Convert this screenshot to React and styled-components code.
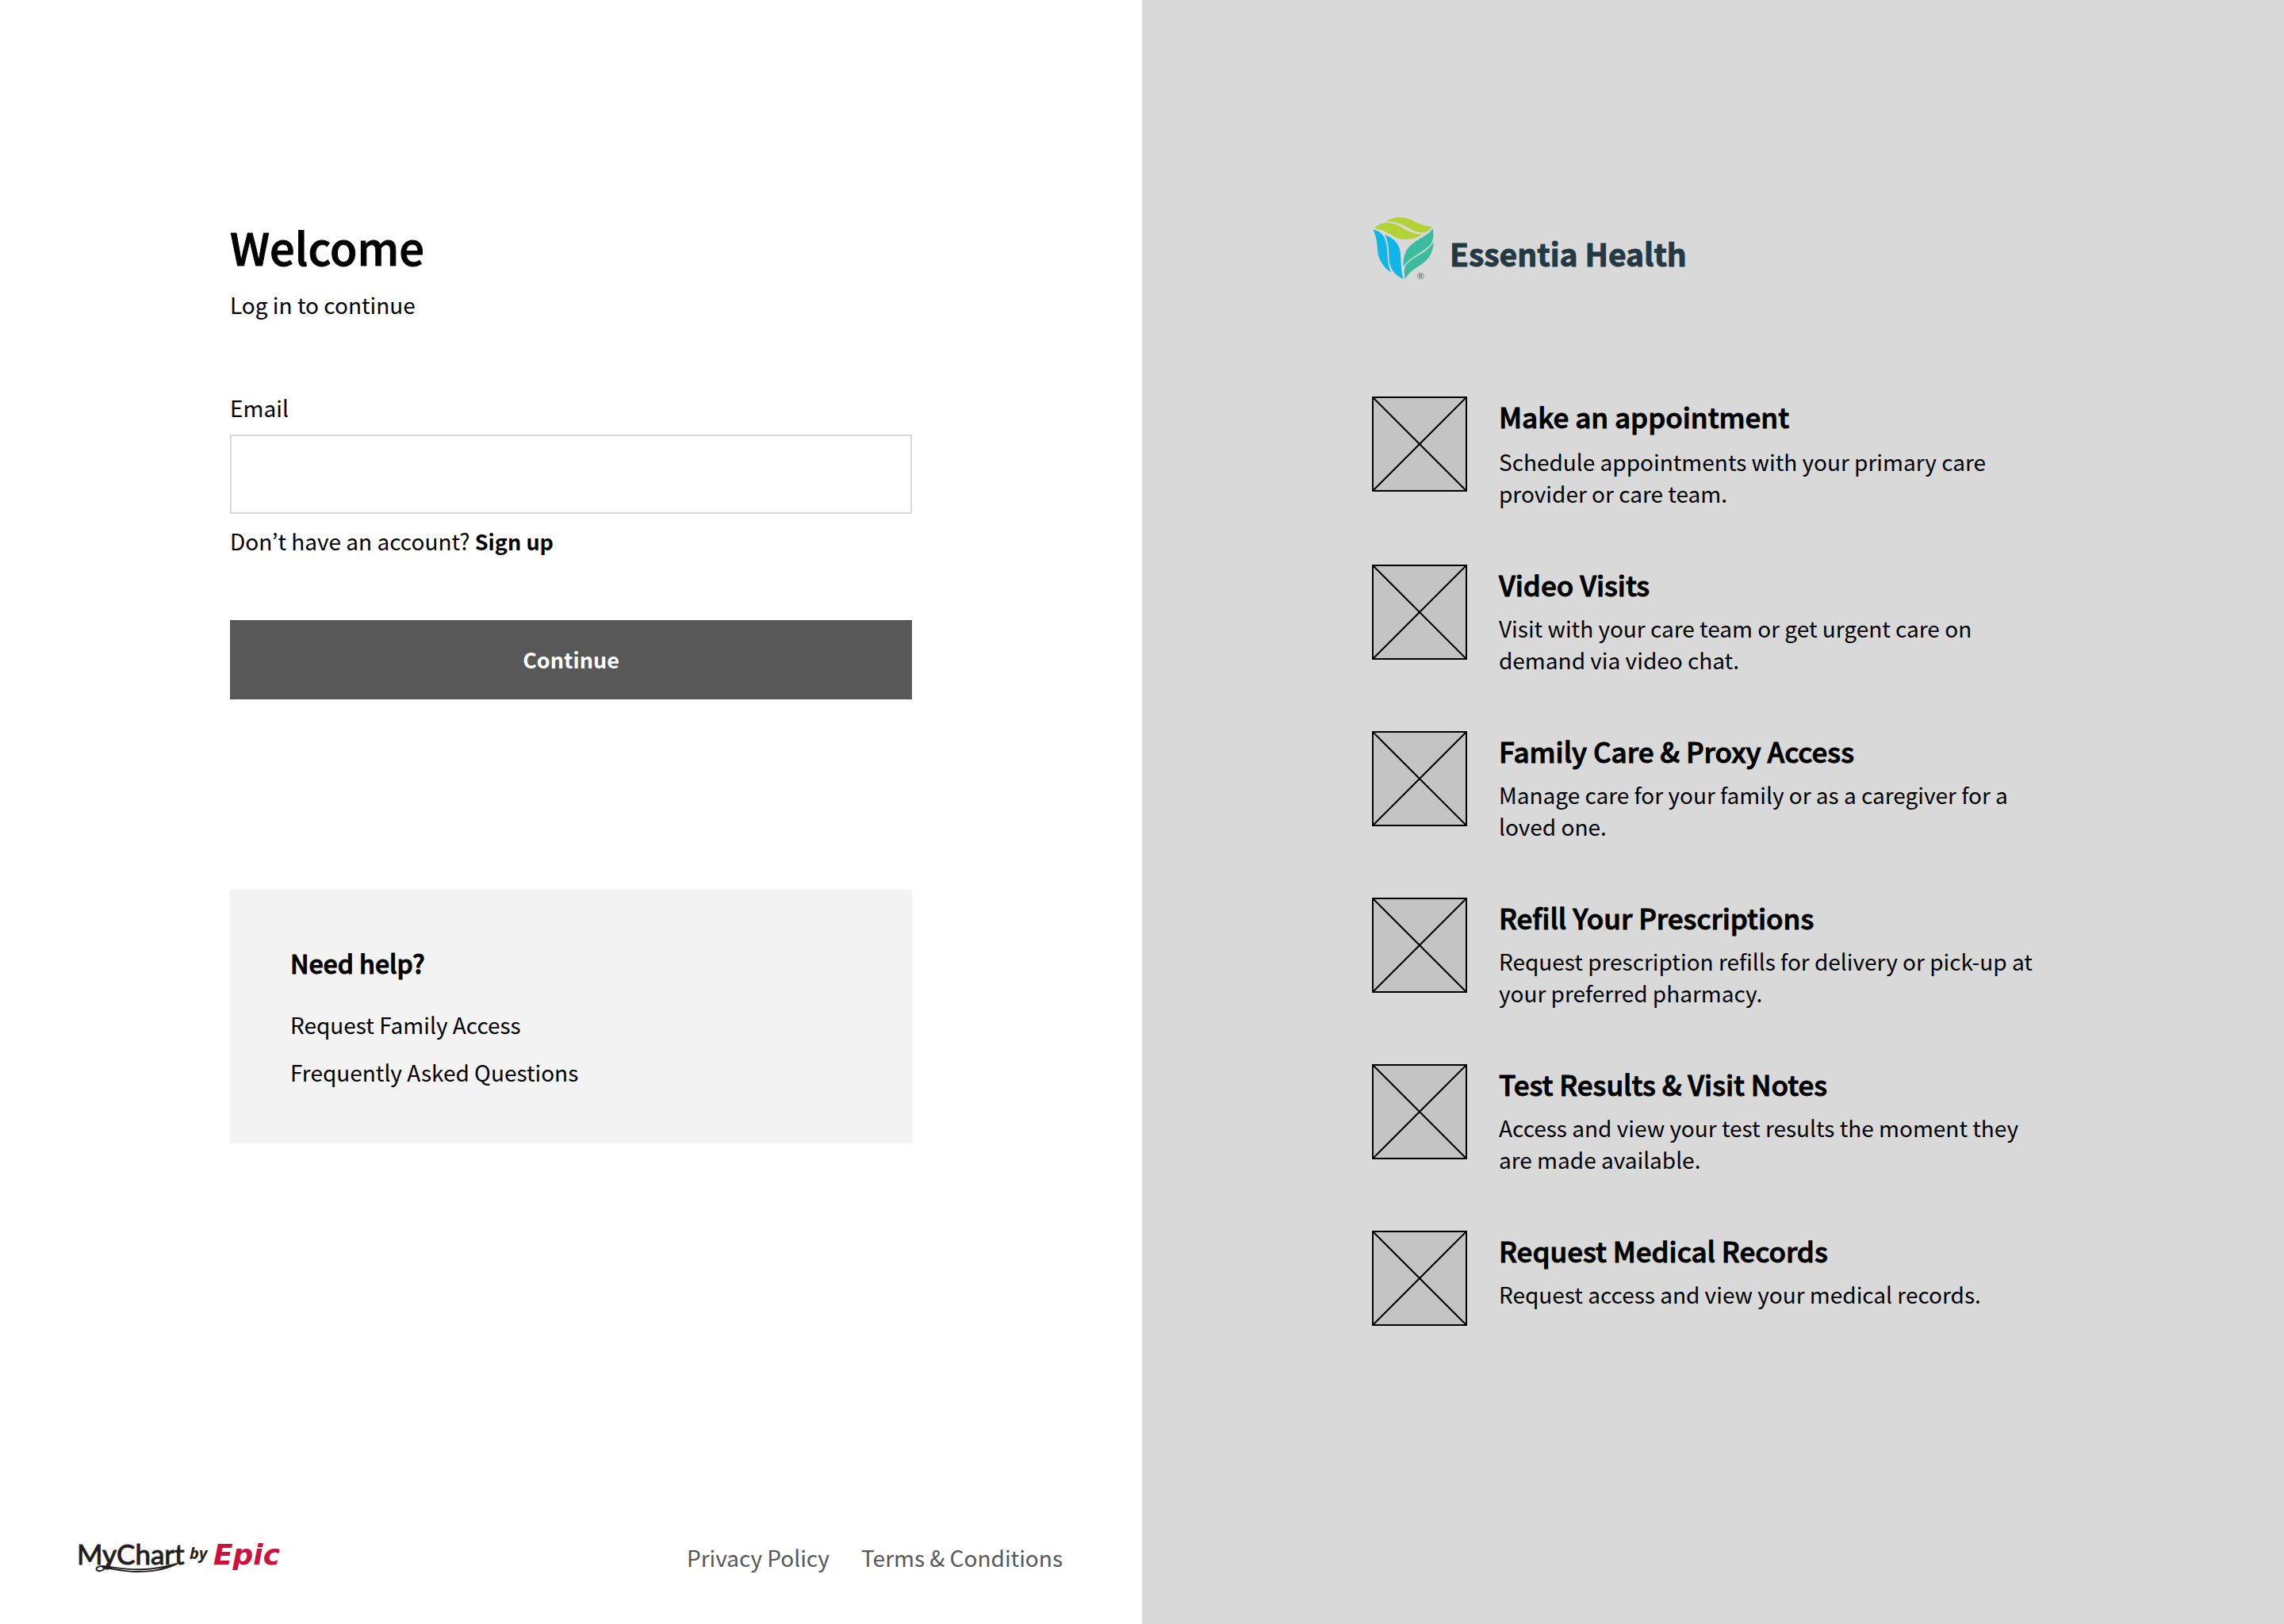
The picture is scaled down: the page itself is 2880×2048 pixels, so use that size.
import React from "react";
import styled, { createGlobalStyle } from "styled-components";

const GlobalStyle = createGlobalStyle`
  *, *::before, *::after { box-sizing: border-box; }
  body {
    margin: 0;
    background: #ffffff;
    color: #000000;
    font-family: "Noto Sans CJK KR", "Noto Sans", sans-serif;
    font-size: 28px;
    line-height: 40px;
  }
  h1, h2, p, ul { margin: 0; padding: 0; }
  h1, h2 {
    font-weight: 500;
    -webkit-text-stroke: 1px currentColor;
  }
`;

const Page = styled.div`
  display: grid;
  grid-template-columns: repeat(2, minmax(0, 1fr));
  min-height: 100vh;
`;

const LoginPanel = styled.main`
  display: flex;
  flex-direction: column;
  padding: 271px 100px 64px;
`;

const FeaturePanel = styled.aside`
  padding: 272px 100px 64px;
  background: #d9d9d9;
`;

const Column = styled.div`
  width: 100%;
  max-width: 860px;
  margin: 0 auto;
`;

const Title = styled.h1`
  margin-bottom: 13px;
  font-size: 56px;
  line-height: 80px;
`;

const Form = styled.form`
  display: flex;
  flex-direction: column;
  margin-top: 90px;
`;

const EmailInput = styled.input`
  height: 100px;
  margin: 14px 0;
  padding: 0 30px;
  border: 2px solid #d9d9d9;
  border-radius: 0;
  background: #ffffff;
  font: inherit;
`;

const TextLink = styled.a`
  color: ${({ $muted }) => ($muted ? "#585858" : "inherit")};
  text-decoration: none;
`;

const SignUpLink = styled(TextLink)`
  font-size: 27px;
  font-weight: 700;
  line-height: 1;
`;

const SubmitButton = styled.button`
  height: 100px;
  margin-top: 80px;
  border: 0;
  background: #585858;
  color: #ffffff;
  font: inherit;
  font-size: 27px;
  font-weight: 700;
`;

const HelpBox = styled.section`
  margin-top: 240px;
  padding: 72px 76px 70px;
  background: #f3f3f3;
`;

const HelpTitle = styled.h2`
  margin-bottom: 38px;
  font-size: 32px;
  line-height: 40px;
`;

const HelpLinks = styled.ul`
  display: grid;
  gap: 20px;
  list-style: none;
`;

const Footer = styled.footer`
  display: flex;
  align-items: center;
  justify-content: space-between;
  margin-top: auto;
`;

const FooterLinks = styled.nav`
  display: flex;
  gap: 40px;
`;

const Logo = styled.svg`
  display: block;
  overflow: visible;
`;

const FeatureList = styled.ul`
  margin-top: 146px;
  list-style: none;
`;

const FeatureItem = styled.li`
  display: flex;
  gap: 40px;
  min-height: 120px;
  margin-bottom: 70px;
`;

const FeatureText = styled.div`
  max-width: 680px;
`;

const FeatureTitle = styled.h2`
  margin-bottom: ${({ $lead }) => ($lead ? 12 : 10)}px;
  font-size: 35px;
  line-height: 50px;
`;

const Placeholder = styled.svg`
  flex: none;
  width: 120px;
  height: 120px;
`;

const features = [
  ["Make an appointment", "Schedule appointments with your primary care provider or care team."],
  ["Video Visits", "Visit with your care team or get urgent care on demand via video chat."],
  ["Family Care & Proxy Access", "Manage care for your family or as a caregiver for a loved one."],
  ["Refill Your Prescriptions", "Request prescription refills for delivery or pick-up at your preferred pharmacy."],
  ["Test Results & Visit Notes", "Access and view your test results the moment they are made available."],
  ["Request Medical Records", "Request access and view your medical records."],
];

function PlaceholderIcon() {
  return (
    <Placeholder viewBox="0 0 120 120" aria-hidden="true">
      <rect x="1" y="1" width="118" height="118" fill="#c4c4c4" stroke="#000" strokeWidth="2" />
      <path d="M1 1L119 119M119 1L1 119" stroke="#000" strokeWidth="2" />
    </Placeholder>
  );
}

function EssentiaLogo() {
  return (
    <Logo width="400" height="82" viewBox="0 0 400 82" role="img" aria-label="Essentia Health">
      <g transform="translate(-30 -22) scale(0.33333)">
        <path fill="#b2d235" d="M143 87C160 76 178 72 195 72C240 72 261 105 318 108C306 124 293 130 278 130C237 128 207 86 143 87Z" />
        <path fill="#b2d235" d="M98 114C112 98 132 91 155 93C203 98 225 137 279 136C260 151 239 156 214 156C169 154 149 119 98 114Z" />
        <path fill="#10b7e6" d="M93 119C127 123 144 147 147 193C149 226 151 255 162 281C130 259 113 229 111 195C109 165 106 139 93 119Z" />
        <path fill="#10b7e6" d="M138 138C182 156 198 179 199 223C200 255 201 282 208 305C172 292 154 260 154 220C153 186 150 156 138 138Z" />
        <path fill="#3cbc9e" d="M320 115C324 136 322 155 315 170C292 202 235 219 209 259C208 216 216 192 246 170C276 147 305 139 320 115Z" />
        <path fill="#3cbc9e" d="M323 166C322 205 306 231 276 251C248 269 232 278 215 306C209 276 211 256 230 240C261 215 298 205 323 166Z" />
        <circle cx="274" cy="294" r="12" fill="none" stroke="#62717a" strokeWidth="2" />
        <path d="M270 301V288H275Q279 288 279 291.500Q279 295 275 295H270M275 295L279 301" fill="none" stroke="#3d4d56" strokeWidth="2.500" />
      </g>
      <text x="98" y="64" fill="#253943" stroke="#253943" strokeWidth="1" fontFamily="Noto Sans CJK KR" fontSize="39" fontWeight="700">Essentia Health</text>
    </Logo>
  );
}

function MyChartLogo() {
  return (
    <Logo width="260" height="40" viewBox="0 0 260 40" role="img" aria-label="MyChart by Epic">
      <text x="-3" y="29" fill="#231f20" stroke="#231f20" strokeWidth="1" fontFamily="Lato" fontSize="35" fontWeight="400">MyChart</text>
      <path d="M36 27C33 35 29 38 24 37C19 35 22 31 29 31C52 33 78 41 123 28C104 37 88 38 72 38C54 38 38 33 29 33" fill="none" stroke="#231f20" strokeWidth="2" strokeLinejoin="round" />
      <text x="139" y="22" fill="#231f20" fontFamily="Open Sans" fontSize="20" fontWeight="700" fontStyle="italic">by</text>
      <text x="169" y="29" fill="#d0103a" fontFamily="DejaVu Sans" fontSize="36" fontWeight="700" fontStyle="italic">Epic</text>
    </Logo>
  );
}

export default function App() {
  return (
    <>
      <GlobalStyle />
      <Page>
        <LoginPanel>
          <Column>
            <Title>Welcome</Title>
            <p>Log in to continue</p>
            <Form onSubmit={(event) => event.preventDefault()}>
              <label htmlFor="email">Email</label>
              <EmailInput id="email" type="email" autoComplete="email" />
              <p>
                Don’t have an account? <SignUpLink href="#sign-up">Sign up</SignUpLink>
              </p>
              <SubmitButton type="submit">Continue</SubmitButton>
            </Form>
            <HelpBox>
              <HelpTitle>Need help?</HelpTitle>
              <HelpLinks>
                <li><TextLink href="#family-access">Request Family Access</TextLink></li>
                <li><TextLink href="#faq">Frequently Asked Questions</TextLink></li>
              </HelpLinks>
            </HelpBox>
          </Column>
          <Footer>
            <MyChartLogo />
            <FooterLinks>
              <TextLink $muted href="#privacy">Privacy Policy</TextLink>
              <TextLink $muted href="#terms">Terms &amp; Conditions</TextLink>
            </FooterLinks>
          </Footer>
        </LoginPanel>
        <FeaturePanel>
          <Column>
            <EssentiaLogo />
            <FeatureList>
              {features.map(([title, description], index) => (
                <FeatureItem key={title}>
                  <PlaceholderIcon />
                  <FeatureText>
                    <FeatureTitle $lead={index === 0}>{title}</FeatureTitle>
                    <p>{description}</p>
                  </FeatureText>
                </FeatureItem>
              ))}
            </FeatureList>
          </Column>
        </FeaturePanel>
      </Page>
    </>
  );
}
